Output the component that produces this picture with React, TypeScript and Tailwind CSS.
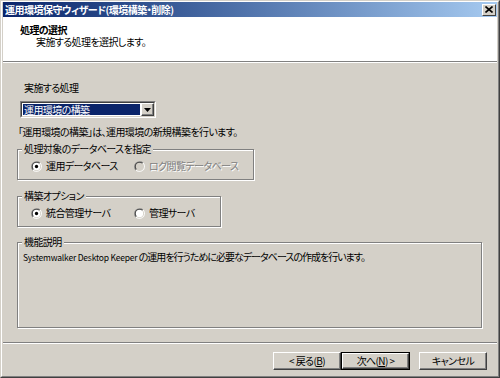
import React from "react";

function Radio({ checked, disabled }: { checked?: boolean; disabled?: boolean }) {
  return (
    <svg width="11" height="11" viewBox="0 0 12 12" className="shrink-0">
      <path d="M1.76 10.24 A6 6 0 0 1 10.24 1.76 Z" fill="#808080" />
      <path d="M1.76 10.24 A6 6 0 0 0 10.24 1.76 Z" fill="#ffffff" />
      <path d="M2.46 9.54 A5 5 0 0 1 9.54 2.46 Z" fill="#404040" />
      <path d="M2.46 9.54 A5 5 0 0 0 9.54 2.46 Z" fill="#d4d0c8" />
      <circle cx="6" cy="6" r="4" fill={disabled ? "#d4d0c8" : "#ffffff"} />
      {checked && <circle cx="6" cy="6" r="1.8" fill={disabled ? "#808080" : "#000000"} />}
    </svg>
  );
}

function GroupBox({
  legend,
  className,
  children,
}: {
  legend: string;
  className: string;
  children?: React.ReactNode;
}) {
  return (
    <div
      className={
        "relative border border-[#808080] shadow-[inset_1px_1px_0_#ffffff,1px_1px_0_#ffffff] " +
        className
      }
    >
      <span className="absolute left-[4px] top-[-7px] px-[2px] bg-[#d4d0c8] leading-[12px]">
        {legend}
      </span>
      {children}
    </div>
  );
}

function Button({ children, def }: { children: React.ReactNode; def?: boolean }) {
  const inner = (
    <div className="h-full w-full flex items-center justify-center border border-t-white border-l-white border-r-[#404040] border-b-[#404040] shadow-[inset_-1px_-1px_0_#808080]">
      {children}
    </div>
  );
  return def ? (
    <div className="h-[18px] w-[69px] border border-black">{inner}</div>
  ) : (
    <div className="h-[18px] w-[68px]">{inner}</div>
  );
}

export default function App() {
  return (
    <div className="w-[500px] h-[378px] bg-[#d4d0c8] border border-t-[#d4d0c8] border-l-[#d4d0c8] border-r-[#404040] border-b-[#404040] font-['Noto_Sans_CJK_JP',sans-serif] [font-feature-settings:'palt'] text-[10px] leading-[12px] tracking-[-0.6px] text-black">
      <div className="h-full flex flex-col border border-t-white border-l-white border-r-[#808080] border-b-[#808080] px-px pb-px">
        {/* Title bar */}
        <div className="h-[15px] shrink-0 flex items-center justify-between bg-gradient-to-r from-[#0a246a] to-[#a6caf0] pl-[2px] pr-[1px]">
          <span className="text-white font-bold text-[10px] leading-[12px] tracking-[-0.5px]">
            運用環境保守ウィザード(環境構築・削除)
          </span>
          <div className="w-[14px] h-[12px] bg-[#d4d0c8] border border-t-white border-l-white border-r-[#404040] border-b-[#404040] flex items-center justify-center">
            <svg width="8" height="7" viewBox="0 0 8 7">
              <path d="M0.5 0.5 L7.5 6.5 M7.5 0.5 L0.5 6.5" stroke="#000" strokeWidth="1.6" />
            </svg>
          </div>
        </div>

        {/* Header */}
        <div className="h-[44px] shrink-0 bg-white pt-[7px]">
          <div className="pl-[17px] font-bold">処理の選択</div>
          <div className="pl-[33px]">実施する処理を選択します。</div>
        </div>
        <div className="h-[2px] shrink-0 border-t border-t-[#808080] bg-white" />

        {/* Body */}
        <div className="flex flex-col px-[14px]">
          <div className="mt-[19px] ml-[7px]">実施する処理</div>

          <div className="mt-[7px] ml-[3px] w-[136px] h-[17px] border border-t-[#808080] border-l-[#808080] border-r-white border-b-white">
            <div className="h-full border border-t-[#404040] border-l-[#404040] border-r-[#d4d0c8] border-b-[#d4d0c8] bg-white flex items-center pl-px pr-0">
              <div className="flex-1 h-[11px] bg-[#0a246a] text-white leading-[11px] pl-[1px]">
                運用環境の構築
              </div>
              <div className="w-[13px] h-[13px] ml-[1px] bg-[#d4d0c8] border border-t-white border-l-white border-r-[#404040] border-b-[#404040] shadow-[inset_-1px_-1px_0_#808080] flex items-center justify-center">
                <svg width="7" height="4" viewBox="0 0 7 4">
                  <path d="M0 0 H7 L3.5 4 Z" fill="#000" />
                </svg>
              </div>
            </div>
          </div>

          <div className="mt-[8px] ml-[1px]">「運用環境の構築」は、運用環境の新規構築を行います。</div>

          <GroupBox legend="処理対象のデータベースを指定" className="mt-[11px] w-[237px] h-[31px]">
            <div className="flex items-center pt-[10px] pl-[13px]">
              <div className="w-[103px] flex items-center gap-[4px]">
                <Radio checked />
                <span>運用データベース</span>
              </div>
              <div className="flex items-center gap-[4px]">
                <Radio disabled />
                <span className="text-[#808080] [text-shadow:1px_1px_0_#ffffff]">ログ閲覧データベース</span>
              </div>
            </div>
          </GroupBox>

          <GroupBox legend="構築オプション" className="mt-[16px] w-[204px] h-[31px]">
            <div className="flex items-center pt-[10px] pl-[13px]">
              <div className="w-[103px] flex items-center gap-[4px]">
                <Radio checked />
                <span>統合管理サーバ</span>
              </div>
              <div className="flex items-center gap-[4px]">
                <Radio />
                <span>管理サーバ</span>
              </div>
            </div>
          </GroupBox>

          <GroupBox legend="機能説明" className="mt-[15px] w-[465px] h-[86px]">
            <div className="pt-[8px] pl-[5px]">
              <span className="text-[8.5px] tracking-[-0.2px]">Systemwalker Desktop Keeper</span>
              <span className="tracking-[-1px]"> の運用を行うために必要なデータベースの作成を行います。</span>
            </div>
          </GroupBox>
        </div>

        <div className="mt-[14px] h-[2px] shrink-0 border-t border-t-[#808080] bg-white" />

        <div className="mt-[8px] flex items-center justify-end pr-[10px]">
          <Button>&lt;&nbsp;戻る(<span className="underline">B</span>)</Button>
          <Button def>次へ(<span className="underline">N</span>)&nbsp;&gt;</Button>
          <div className="w-[9px]" />
          <Button>キャンセル</Button>
        </div>
      </div>
    </div>
  );
}
